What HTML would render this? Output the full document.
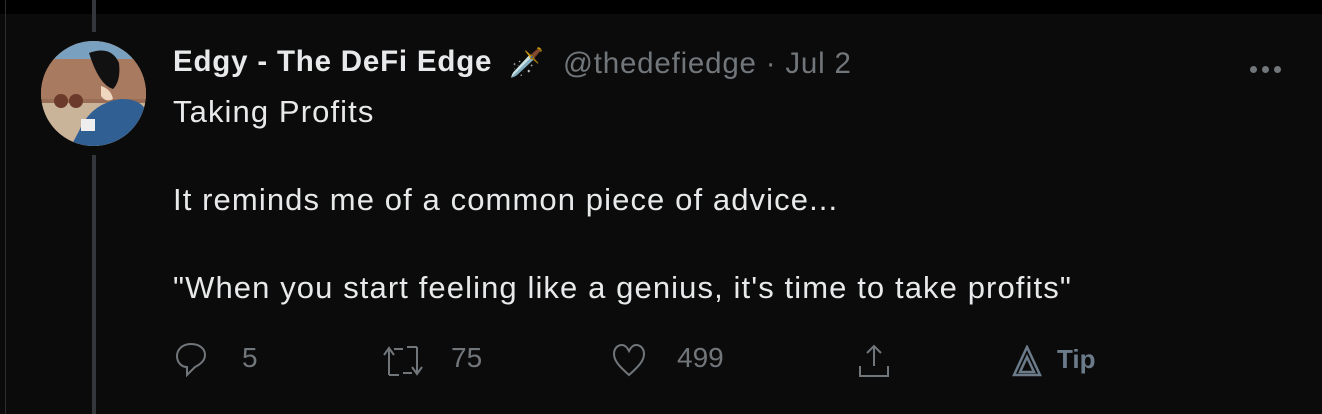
<!DOCTYPE html>
<html><head><meta charset="utf-8"><style>
html,body{margin:0;padding:0;background:#0b0b0b;width:1322px;height:414px;overflow:hidden;font-family:"Liberation Sans",sans-serif;}
.top{position:absolute;left:0;top:0;width:1322px;height:14px;background:#000;}
.lline{position:absolute;left:5px;top:0;width:1px;height:414px;background:#2a2d30;}
.t1{position:absolute;left:92px;top:0;width:4px;height:32px;background:#33363a;}
.t2{position:absolute;left:92px;top:155px;width:4px;height:259px;background:#33363a;}
.av{position:absolute;left:41px;top:41px;width:105px;height:105px;border-radius:50%;overflow:hidden;background:#8a6a58;}
.name{position:absolute;left:173px;top:45px;font-size:29.5px;letter-spacing:0.8px;font-weight:bold;color:#e7e9ea;white-space:nowrap;}
.handle{position:absolute;left:563px;top:47px;font-size:29.5px;letter-spacing:0.8px;color:#71767b;white-space:nowrap;}
.emo{position:absolute;left:509px;top:46px;font-size:28px;}
.body{position:absolute;left:173px;top:90px;font-size:31px;letter-spacing:1.1px;line-height:44px;color:#e7e9ea;white-space:pre;}
.dots{position:absolute;left:1250px;top:60px;}
.dots i{display:inline-block;width:7px;height:7px;border-radius:50%;background:#71767b;margin-right:5px;}
.act{position:absolute;top:342px;color:#71767b;font-size:28px;}
</style></head><body>
<div class="top"></div><div class="lline"></div><div class="t1"></div><div class="t2"></div>
<div class="av"><svg width="105" height="105" viewBox="0 0 105 105">
<rect width="105" height="105" fill="#9a6e56"/>
<rect width="105" height="18" fill="#7aa0c0"/>
<rect x="0" y="18" width="105" height="40" fill="#a87a60"/>
<rect x="0" y="62" width="105" height="43" fill="#c9b49a"/>
<circle cx="20" cy="60" r="7" fill="#6b3a2a"/><circle cx="35" cy="60" r="7" fill="#6b3a2a"/>
<path d="M48 12 Q70 4 78 22 Q80 40 72 48 Q58 44 48 12Z" fill="#111"/>
<path d="M60 45 Q70 48 72 58 Q65 62 60 55Z" fill="#f0d8c0"/>
<path d="M38 90 Q50 62 80 58 Q100 58 105 70 L105 105 L30 105Z" fill="#2f5f93"/>
<rect x="40" y="78" width="14" height="12" fill="#eee"/>
</svg></div>
<div class="name">Edgy - The DeFi Edge</div>
<div class="emo">🗡️</div>
<div class="handle">@thedefiedge · Jul 2</div>
<div class="body">Taking Profits

It reminds me of a common piece of advice...

"When you start feeling like a genius, it's time to take profits"</div>
<div class="dots"><i></i><i></i><i></i></div>

<svg class="act" style="left:175px;top:342px" width="32" height="36" viewBox="0 0 32 36" fill="none" stroke="#71767b" stroke-width="2"><path d="M16 2 C7 2 2 8 2 14 C2 21 7 25 12 25 L12 33 L20 25 C26 22 30 18 30 13 C30 7 25 2 16 2Z"/></svg>
<div class="act" style="left:242px">5</div>
<svg class="act" style="left:383px;top:345px" width="40" height="32" viewBox="0 0 40 32" fill="none" stroke="#71767b" stroke-width="2"><path d="M6 30 V4 M1 10 L6 3 L11 10"/><path d="M11 4 H20"/><path d="M34 2 V28 M29 22 L34 29 L39 22"/><path d="M29 28 H20"/><path d="M6 30 H16 M34 2 H24"/></svg>
<div class="act" style="left:451px">75</div>
<svg class="act" style="left:612px;top:343px" width="34" height="34" viewBox="0 0 34 34" fill="none" stroke="#71767b" stroke-width="2"><path d="M17 32 C8 24 2 18 2 11 C2 5 6 2 10 2 C13 2 15 4 17 8 C19 4 21 2 24 2 C28 2 32 5 32 11 C32 18 26 24 17 32Z"/></svg>
<div class="act" style="left:677px">499</div>
<svg class="act" style="left:857px;top:344px" width="34" height="34" viewBox="0 0 34 34" fill="none" stroke="#71767b" stroke-width="2"><path d="M17 2 V22 M10 9 L17 2 L24 9 M3 22 V32 H31 V22"/></svg>
<svg class="act" style="left:1011px;top:345px" width="32" height="32" viewBox="0 0 32 32" fill="none" stroke="#6b7b8a" stroke-width="2.5"><path d="M16 2 L29 30 H3Z M16 12 L23 27 H9Z"/></svg>
<div class="act" style="left:1057px;font-weight:bold;color:#6b7b8a;font-size:26px;top:344px">Tip</div>
</body></html>
